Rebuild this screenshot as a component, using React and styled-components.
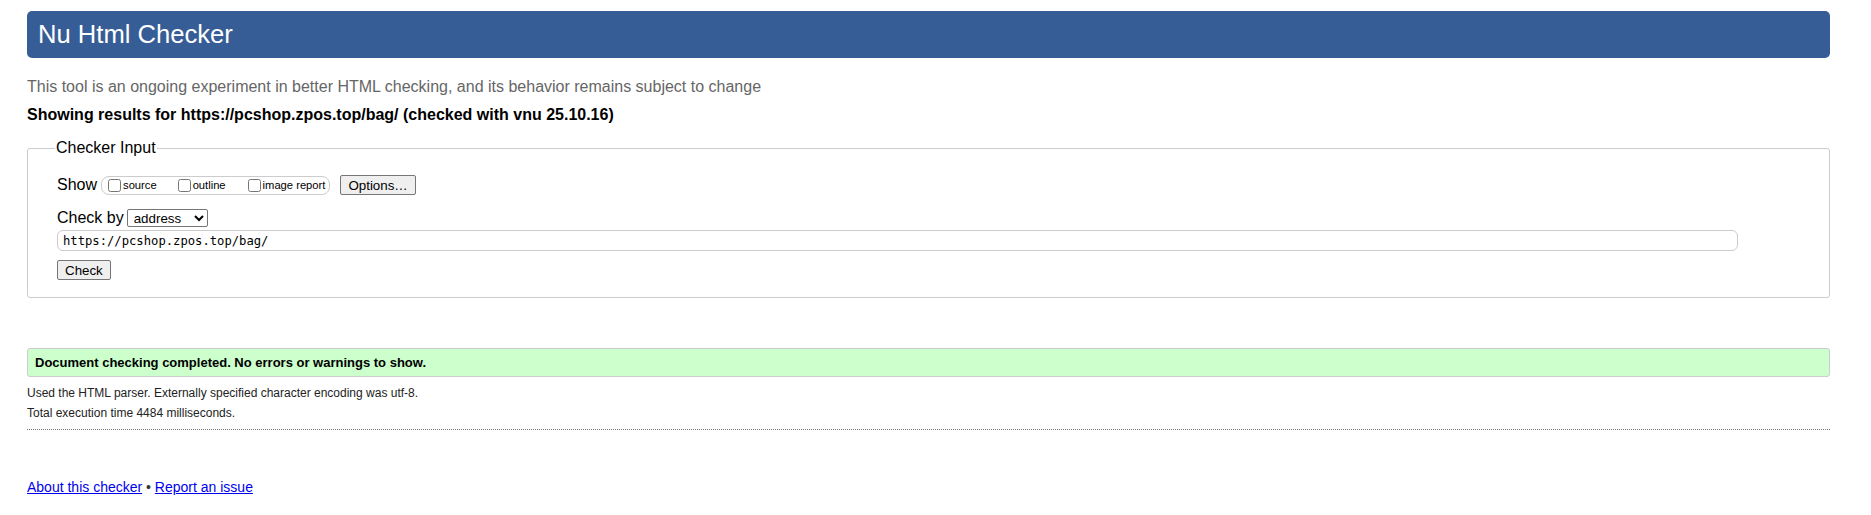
import React from 'react'
import styled, { createGlobalStyle } from 'styled-components'

const GlobalStyle = createGlobalStyle`
  html, body {
    margin: 0;
    padding: 0;
    background: #fff;
  }
  body {
    font-family: "Liberation Sans", Arial, sans-serif;
    color: #000;
  }
`

const Page = styled.div`
  padding: 11px 41px 0 27px;
`

const Header = styled.h1`
  margin: 0;
  height: 47px;
  line-height: 47px;
  padding-left: 11px;
  background: #365d95;
  color: #fff;
  border-radius: 5px;
  font-size: 25.6px;
  font-weight: normal;
`

const Intro = styled.p`
  margin: 19px 0 0;
  font-size: 16px;
  line-height: 19px;
  color: #666;
`

const Results = styled.p`
  margin: 9px 0 0;
  font-size: 16px;
  line-height: 19px;
  font-weight: bold;
`

const Fieldset = styled.fieldset`
  margin: 15px 0 0;
  padding: 8px 28px 17px 29px;
  border: 1px solid #ccc;
  border-radius: 3px;
`

const Legend = styled.legend`
  padding: 0 1px;
  margin-left: -2px;
  font-size: 16px;
`

const Row = styled.div`
  display: flex;
  align-items: center;
  height: 20px;
  margin-top: ${(p) => p.$top || 0}px;
  font-size: 16px;
`

const Label = styled.span`
  margin-right: ${(p) => p.$gap || 0}px;
`

const ShowGroup = styled.span`
  display: inline-flex;
  align-items: center;
  height: 17px;
  padding: 0 4px 0 2px;
  border: 1px solid #ccc;
  border-radius: 8px;
  margin-right: 10px;
`

const CheckItem = styled.label`
  display: inline-flex;
  align-items: center;
  font-size: 11.2px;
  margin-right: ${(p) => p.$gap || 0}px;
`

const Box = styled.input`
  margin: 0 2px 0 4px;
  width: 13px;
  height: 13px;
`

const Button = styled.button`
  font-family: "Liberation Sans", Arial, sans-serif;
  font-size: 13.33px;
  height: 20px;
  padding: 0 ${(p) => p.$pad || 6}px;
  background: #efefef;
  color: #000;
  border: 1px solid #767676;
  border-radius: 2px;
`

const Select = styled.select`
  font-family: "Liberation Sans", Arial, sans-serif;
  font-size: 13.33px;
  width: 81px;
  height: 18px;
  padding: 0 0 0 2px;
  border: 1px solid #767676;
  border-radius: 2px;
  background: #fff;
  color: #000;
`

const UrlInput = styled.input`
  display: block;
  box-sizing: border-box;
  width: calc(100% - 63px);
  height: 21px;
  margin-top: 2px;
  padding: 0 5px;
  border: 1px solid #ccc;
  border-radius: 6px;
  font-family: "DejaVu Sans Mono", "Liberation Mono", monospace;
  font-size: 12.2px;
  color: #000;
`

const SubmitRow = styled.div`
  margin-top: 9px;
  height: 20px;
`

const Success = styled.p`
  margin: 50px 0 0;
  height: 27px;
  line-height: 27px;
  padding-left: 7px;
  background: #ccffcc;
  border: 1px solid #ccc;
  border-radius: 3px;
  font-size: 13px;
  font-weight: bold;
`

const Detail = styled.p`
  margin: ${(p) => p.$top}px 0 0;
  font-size: 12px;
  line-height: 14px;
  color: #222;
`

const Rule = styled.hr`
  margin: 9px 0 0;
  border: 0;
  border-top: 1px dotted #777;
`

const Footer = styled.p`
  margin: 49px 0 0;
  font-size: 14px;
  line-height: 16px;
  color: #333;

  a {
    color: #00e;
  }
`

export default function App() {
  return (
    <>
      <GlobalStyle />
      <Page>
        <Header>Nu Html Checker</Header>
        <Intro>This tool is an ongoing experiment in better HTML checking, and its behavior remains subject to change</Intro>
        <Results>Showing results for https://pcshop.zpos.top/bag/ (checked with vnu 25.10.16)</Results>

        <Fieldset>
          <Legend>Checker Input</Legend>
          <Row $top={10}>
            <Label $gap={4}>Show</Label>
            <ShowGroup>
              <CheckItem $gap={17}><Box type="checkbox" />source</CheckItem>
              <CheckItem $gap={18}><Box type="checkbox" />outline</CheckItem>
              <CheckItem><Box type="checkbox" />image report</CheckItem>
            </ShowGroup>
            <Button type="button" $pad={7}>Options…</Button>
          </Row>
          <Row $top={13}>
            <Label $gap={3}>Check by</Label>
            <Select defaultValue="address">
              <option value="address">address</option>
              <option value="file">file upload</option>
              <option value="text">text input</option>
            </Select>
          </Row>
          <UrlInput type="url" defaultValue="https://pcshop.zpos.top/bag/" />
          <SubmitRow>
            <Button type="submit" $pad={7}>Check</Button>
          </SubmitRow>
        </Fieldset>

        <Success>Document checking completed. No errors or warnings to show.</Success>
        <Detail $top={9}>Used the HTML parser. Externally specified character encoding was utf-8.</Detail>
        <Detail $top={6}>Total execution time 4484 milliseconds.</Detail>
        <Rule />
        <Footer>
          <a href="#about">About this checker</a> • <a href="#report">Report an issue</a>
        </Footer>
      </Page>
    </>
  )
}
